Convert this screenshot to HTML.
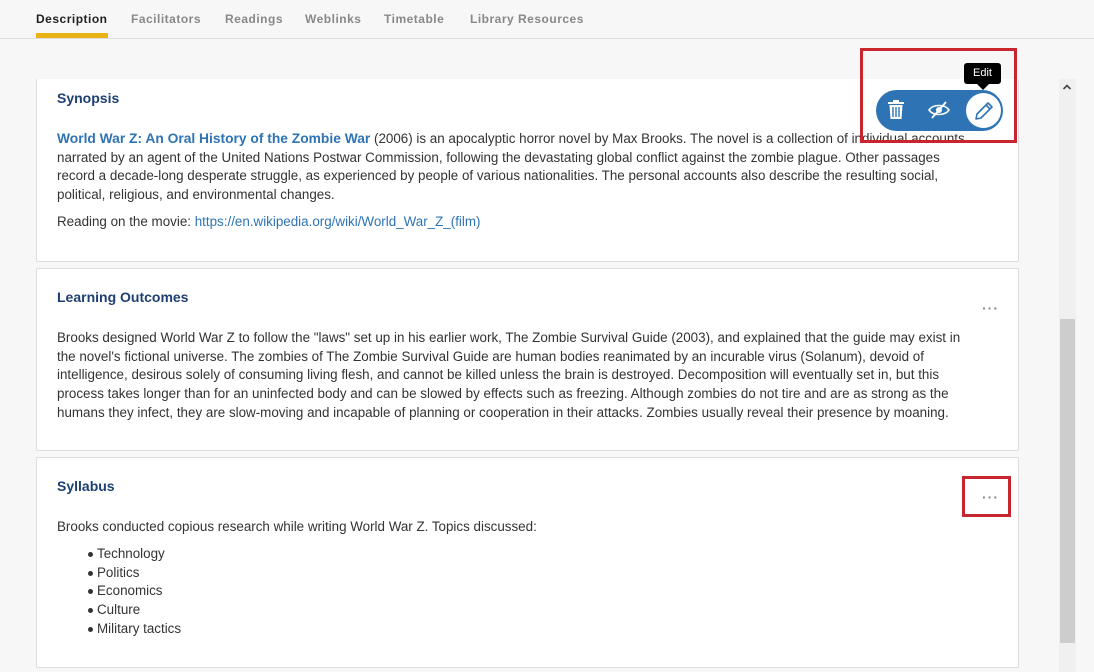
<!DOCTYPE html>
<html><head><meta charset="utf-8"><style>
*{box-sizing:border-box;margin:0;padding:0}
body{width:1094px;height:672px;overflow:hidden;background:#f7f7f7;font-family:"Liberation Sans",sans-serif;color:#333;position:relative}
.tabs{position:absolute;left:0;top:0;width:1094px;height:39px;border-bottom:1px solid #ddd;background:#f7f7f7}
.tab{position:absolute;top:12px;font-size:12px;letter-spacing:0.5px;color:#888;font-weight:bold}
.tab.act{color:#222}
.ul{position:absolute;left:36px;top:33px;width:72px;height:5px;background:#eab315}
.card{position:absolute;left:36px;width:983px;background:#fff;border:1px solid #ddd;border-radius:2px}
.h{position:absolute;left:20px;font-size:14px;font-weight:bold;color:#1d3f72}
.p{position:absolute;left:20px;font-size:13.4px;line-height:18.7px;white-space:nowrap;color:#333}
a{color:#2e74b5;text-decoration:none}
.dots{position:absolute;font-size:14px;color:#888;letter-spacing:1px;font-weight:bold}
.red{position:absolute;border:3px solid #c8262e}
li{list-style:none;position:relative}
li:before{content:"";position:absolute;left:-9px;top:7px;width:5px;height:5px;border-radius:50%;background:#333}
</style></head><body>
<div class="tabs">
<div class="tab act" style="left:36px">Description</div>
<div class="tab" style="left:131px">Facilitators</div>
<div class="tab" style="left:225px">Readings</div>
<div class="tab" style="left:305px">Weblinks</div>
<div class="tab" style="left:384px">Timetable</div>
<div class="tab" style="left:470px">Library Resources</div>
<div class="ul"></div>
</div>

<div class="card" style="top:79px;height:183px;border-top:none">
<div class="h" style="top:11px">Synopsis</div>
<div class="p" style="top:51px"><a style="font-weight:bold;font-size:13.8px" href="#">World War Z: An Oral History of the Zombie War</a> (2006) is an apocalyptic horror novel by Max Brooks. The novel is a collection of individual accounts<br>narrated by an agent of the United Nations Postwar Commission, following the devastating global conflict against the zombie plague. Other passages<br>record a decade-long desperate struggle, as experienced by people of various nationalities. The personal accounts also describe the resulting social,<br>political, religious, and environmental changes.</div>
<div class="p" style="top:134px">Reading on the movie: <a href="#">https://en.wikipedia.org/wiki/World_War_Z_(film)</a></div>
</div>

<div class="card" style="top:268px;height:183px">
<div class="h" style="top:20px">Learning Outcomes</div>
<div class="dots" style="left:945px;top:31px">···</div>
<div class="p" style="top:60px">Brooks designed World War Z to follow the "laws" set up in his earlier work, The Zombie Survival Guide (2003), and explained that the guide may exist in<br>the novel's fictional universe. The zombies of The Zombie Survival Guide are human bodies reanimated by an incurable virus (Solanum), devoid of<br>intelligence, desirous solely of consuming living flesh, and cannot be killed unless the brain is destroyed. Decomposition will eventually set in, but this<br>process takes longer than for an uninfected body and can be slowed by effects such as freezing. Although zombies do not tire and are as strong as the<br>humans they infect, they are slow-moving and incapable of planning or cooperation in their attacks. Zombies usually reveal their presence by moaning.</div>
</div>

<div class="card" style="top:457px;height:211px">
<div class="h" style="top:20px">Syllabus</div>
<div class="dots" style="left:945px;top:31px">···</div>
<div class="p" style="top:60px">Brooks conducted copious research while writing World War Z. Topics discussed:</div>
<ul class="p" style="top:87px;left:60px"><li>Technology</li><li>Politics</li><li>Economics</li><li>Culture</li><li>Military tactics</li></ul>
</div>
<div class="red" style="left:962px;top:476px;width:49px;height:41px"></div>

<div style="position:absolute;left:1059px;top:79px;width:17px;height:593px;background:#f0f0f0"></div>
<div style="position:absolute;left:1060px;top:319px;width:15px;height:324px;background:#cdcdcd"></div>
<svg style="position:absolute;left:1062px;top:83px" width="10" height="8"><path d="M1.5 6 L5 2.5 L8.5 6" stroke="#444" stroke-width="1.6" fill="none"/></svg>

<div style="position:absolute;left:876px;top:90px;width:127px;height:41px;border-radius:21px;background:#2e74b5"></div>
<svg style="position:absolute;left:886px;top:99px" width="20" height="22" viewBox="0 0 20 22"><rect x="2" y="3" width="16" height="2" fill="#fff"/><rect x="7" y="1" width="6" height="2" fill="#fff"/><path d="M3.5 6 h13 l-1 14 h-11z" fill="#fff"/><path d="M7 8v10M10 8v10M13 8v10" stroke="#2e74b5" stroke-width="1.4"/></svg>
<svg style="position:absolute;left:927px;top:100px" width="24" height="20" viewBox="0 0 24 20"><path d="M2 10 C6 4 18 4 22 10 C18 16 6 16 2 10Z" fill="none" stroke="#fff" stroke-width="1.6"/><circle cx="12" cy="10" r="3" fill="#fff"/><path d="M5 18 L19 2" stroke="#fff" stroke-width="1.8"/></svg>
<div style="position:absolute;left:966px;top:93px;width:35px;height:35px;border-radius:50%;background:#fff"></div>
<svg style="position:absolute;left:972px;top:99px" width="24" height="24" viewBox="0 0 24 24"><path d="M4 20 L5 15 L16 4 L20 8 L9 19 Z M14 6 L18 10" fill="none" stroke="#2e74b5" stroke-width="1.6" stroke-linejoin="round"/></svg>
<div style="position:absolute;left:964px;top:63px;width:37px;height:21px;background:#000;border-radius:3px;color:#fff;font-size:11px;text-align:center;line-height:21px">Edit</div>
<div style="position:absolute;left:977px;top:84px;width:0;height:0;border-left:6px solid transparent;border-right:6px solid transparent;border-top:6px solid #000"></div>
<div class="red" style="left:860px;top:48px;width:157px;height:95px"></div>
</body></html>
